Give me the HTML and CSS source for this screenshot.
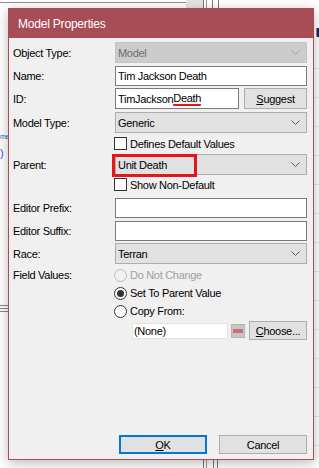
FILE: index.html
```html
<!DOCTYPE html>
<html>
<head>
<meta charset="utf-8">
<link rel="stylesheet" href="styles.css">
</head>
<body>
<div class="desk">
  <div class="deco deco-topline"></div>
  <div class="deco deco-topbox"></div>
  <div class="deco deco-vl v1"></div>
  <div class="deco deco-vl v2"></div>
  <div class="deco deco-vl v3"></div>
  <div class="deco deco-vl v4"></div>
  <div class="deco deco-bl b1"></div>
  <div class="deco deco-bl b2"></div>
  <div class="deco deco-bl b3"></div>
  <div class="deco deco-bl b4"></div>
  <span class="deco deco-name">me</span>
  <span class="deco deco-paren">)</span>
  <div class="deco deco-grip"></div>
  <div class="deco deco-square"></div>
  <div class="deco deco-rstrip"></div>

  <div class="dialog">
    <div class="titlebar">Model Properties</div>
    <div class="content">
      <div class="row r1">
        <div class="label">Object Type:</div>
        <div class="combo disabled"><span>Model</span><svg class="chev" width="9" height="5" viewBox="0 0 9 5"><polyline points="0.5,0.5 4.5,4.5 8.5,0.5" /></svg></div>
      </div>
      <div class="row r2">
        <div class="label">Name:</div>
        <div class="textbox">Tim Jackson Death</div>
      </div>
      <div class="row r3">
        <div class="label">ID:</div>
        <div class="textbox idbox">TimJackson<span class="squiggle">Death</span></div>
        <div class="btn suggest"><u>S</u>uggest</div>
      </div>
      <div class="row r4">
        <div class="label">Model Type:</div>
        <div class="combo"><span>Generic</span><svg class="chev" width="9" height="5" viewBox="0 0 9 5"><polyline points="0.5,0.5 4.5,4.5 8.5,0.5" /></svg></div>
      </div>
      <div class="row r5 indent">
        <div class="check"></div><span class="opt">Defines Default Values</span>
      </div>
      <div class="row r6">
        <div class="label">Parent:</div>
        <div class="combo parent"><span>Unit Death</span><svg class="chev" width="9" height="5" viewBox="0 0 9 5"><polyline points="0.5,0.5 4.5,4.5 8.5,0.5" /></svg><div class="highlight"></div></div>
      </div>
      <div class="row r7 indent">
        <div class="check"></div><span class="opt">Show Non-Default</span>
      </div>
      <div class="row r8">
        <div class="label">Editor Prefix:</div>
        <div class="textbox"></div>
      </div>
      <div class="row r9">
        <div class="label">Editor Suffix:</div>
        <div class="textbox"></div>
      </div>
      <div class="row r10">
        <div class="label">Race:</div>
        <div class="combo"><span>Terran</span><svg class="chev" width="9" height="5" viewBox="0 0 9 5"><polyline points="0.5,0.5 4.5,4.5 8.5,0.5" /></svg></div>
      </div>
      <div class="row r11">
        <div class="label">Field Values:</div>
        <div class="radio off"></div><span class="opt dim">Do Not Change</span>
      </div>
      <div class="row r12 indent">
        <div class="radio on"></div><span class="opt">Set To Parent Value</span>
      </div>
      <div class="row r13 indent">
        <div class="radio"></div><span class="opt">Copy From:</span>
      </div>
      <div class="row r14 indent2">
        <div class="nonebox">(None)</div>
        <div class="swatch"><div class="swatch-bar"></div></div>
        <div class="btn choose"><u>C</u>hoose...</div>
      </div>
      <div class="footer">
        <div class="btn ok"><u>O</u>K</div>
        <div class="btn cancel">Cancel</div>
      </div>
    </div>
  </div>
</div>
</body>
</html>
```
FILE: styles.css
```css
* { box-sizing: border-box; }
html, body { margin: 0; padding: 0; }
body {
  width: 319px;
  height: 468px;
  overflow: hidden;
  background: #ffffff;
  font-family: "Liberation Sans", Arial, sans-serif;
  font-size: 11px;
  letter-spacing: -0.3px;
  color: #000;
}
.desk {
  position: relative;
  width: 319px;
  height: 468px;
  padding: 8px 0 0 8px;
}
.deco { position: absolute; }
.deco-topline { left: 0; top: 2px; width: 203px; height: 1px; background: #8c8c8c; }
.deco-topbox { left: 186px; top: 0; width: 17px; height: 8px; background: #e4e4e4; }
.deco-vl { top: 0; width: 1px; height: 8px; background: #7a7a7a; }
.v1 { left: 203px; }
.v2 { left: 206px; background: #9a9a9a; }
.v3 { left: 212px; }
.v4 { left: 218px; }
.deco-bl { top: 460px; width: 1px; height: 8px; background: #7a7a7a; }
.b1 { left: 203px; }
.b2 { left: 206px; background: #9a9a9a; }
.b3 { left: 213px; }
.b4 { left: 217px; }
.deco-name { left: 0; top: 133px; color: #2a5bd7; font-size: 7px; letter-spacing: -0.4px; }
.deco-paren { left: 0; top: 147px; color: #2a5bd7; }
.deco-grip {
  left: 0; top: 305px; width: 8px; height: 7px;
  border-top: 1px solid #8a8a8a; border-bottom: 1px solid #8a8a8a;
  background: linear-gradient(#fff 2px, #8a8a8a 2px, #8a8a8a 3px, #fff 3px);
}
.deco-square { left: 316px; top: 28px; width: 4px; height: 9px; background: #1c2466; border-left: 1px solid #d08a2a; }
.deco-rstrip {
  left: 314px; top: 40px; width: 5px; height: 420px;
  background: repeating-linear-gradient(#fff 0, #fff 28px, #e9e9e9 28px, #e9e9e9 29px);
}

.dialog {
  position: relative;
  z-index: 1;
  width: 306px;
  height: 452px;
  background: #f0f0f0;
  border: 1px solid #a84c56;
  box-shadow: 0 3px 12px rgba(0, 0, 0, 0.28);
  display: flex;
  flex-direction: column;
}
.titlebar {
  height: 29px;
  background: #a84c56;
  color: #fff;
  font-size: 12px;
  letter-spacing: -0.2px;
  padding-left: 9px;
  display: flex;
  align-items: center;
}
.content {
  flex: 1;
  display: flex;
  flex-direction: column;
  padding: 4px 6px 5px 4px;
}
.row {
  display: flex;
  align-items: center;
  flex: none;
}
.label { width: 102px; flex: none; }
.indent { padding-left: 101px; }
.indent2 { padding-left: 119px; }

.r1 { height: 21px; }
.r2 { height: 20px; margin-top: 3px; }
.r3 { height: 21px; margin-top: 2px; }
.r4 { height: 21px; margin-top: 3px; }
.r5 { height: 13px; margin-top: 4px; }
.r6 { height: 21px; margin-top: 4px; }
.r7 { height: 13px; margin-top: 3px; }
.r8 { height: 20px; margin-top: 7px; }
.r9 { height: 20px; margin-top: 3px; }
.r10 { height: 21px; margin-top: 2px; }
.r11 { height: 14px; margin-top: 4px; }
.r11 .label { margin-right: -1px; }
.r12 { height: 14px; margin-top: 4px; }
.r13 { height: 14px; margin-top: 4px; }
.r14 { height: 19px; margin-top: 3px; }

.combo {
  position: relative;
  width: 192px;
  height: 100%;
  background: #e1e1e1;
  border: 1px solid #adadad;
  display: flex;
  align-items: center;
  padding-left: 2px;
}
.combo.disabled { background: #cccccc; border-color: #c4c4c4; color: #6d6d6d; }
.chev { position: absolute; right: 6px; top: 7px; }
.chev polyline { fill: none; stroke: #5a5a5a; stroke-width: 1; }
.combo.disabled .chev polyline { stroke: #a4a4a4; }
.highlight {
  position: absolute;
  left: -4px; top: -1px;
  width: 85px; height: 23px;
  border: 3px solid #e8141c;
}

.textbox {
  width: 192px;
  height: 100%;
  background: #fff;
  border: 1px solid #7a7a7a;
  display: flex;
  align-items: center;
  padding-left: 2px;
  white-space: nowrap;
}
.idbox { width: 124px; margin-right: 5px; }
.squiggle {
  border-bottom: 2px solid #e8141c;
  border-radius: 1px;
}

.btn {
  background: #e1e1e1;
  border: 1px solid #adadad;
  display: flex;
  align-items: center;
  justify-content: center;
  height: 100%;
}
.suggest { width: 63px; }
.choose { width: 58px; }

.check {
  width: 13px; height: 13px;
  border: 1px solid #333;
  background: #fff;
  flex: none;
}
.radio {
  width: 13px; height: 13px;
  border: 1px solid #333;
  border-radius: 50%;
  background: #fff;
  flex: none;
  display: flex;
  align-items: center;
  justify-content: center;
}
.radio.off { border-color: #bcbcbc; background: #f0f0f0; }
.radio.on::after {
  content: "";
  width: 7px; height: 7px;
  border-radius: 50%;
  background: #333;
}
.opt { margin-left: 3px; white-space: nowrap; }
.dim { color: #a0a0a0; }

.nonebox {
  width: 96px;
  height: 16px;
  background: #fff;
  border: 1px solid #e3e3e3;
  display: flex;
  align-items: center;
  padding-left: 1px;
}
.swatch {
  width: 14px; height: 14px;
  margin-left: 3px;
  margin-right: 4px;
  background: #c6c6c6;
  border: 1px solid #b4b4b4;
  display: flex;
  align-items: center;
  justify-content: center;
}
.swatch-bar { width: 10px; height: 4px; background: #c86f78; }

.footer {
  margin-top: auto;
  height: 19px;
  display: flex;
  justify-content: flex-end;
  gap: 12px;
  flex: none;
}
.ok { width: 88px; border: 2px solid #0078d7; }
.cancel { width: 88px; }
```
